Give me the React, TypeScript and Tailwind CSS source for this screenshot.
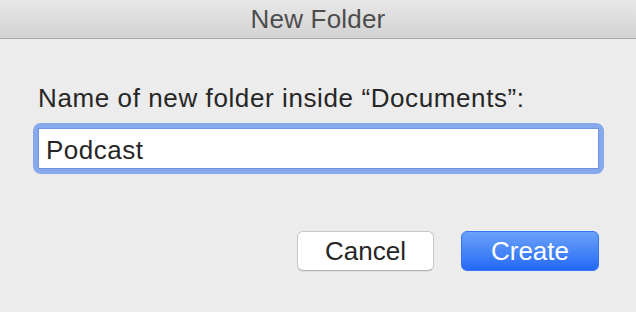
import { useState } from "react"

const font = { fontFamily: '"Liberation Sans", Arial, sans-serif' }

const App = () => {
  const [name, setName] = useState("Podcast")

  return (
    <div
      className="w-[636px] h-[312px] bg-[#ececec] flex flex-col overflow-hidden"
      style={font}>
      <div className="h-[39px] shrink-0 bg-gradient-to-b from-[#e8e8e8] to-[#d2d2d2] border-b border-[#ababab] flex items-center justify-center">
        <span className="text-[26px] leading-[30px] text-[#4d4d4d] tracking-[0.2px]">
          New Folder
        </span>
      </div>
      <div className="flex flex-col pl-[33px] pr-[32px] pt-[44px]">
        <label className="ml-[5px] text-[26px] leading-[30px] text-[#262626] tracking-[0.6px]">
          Name of new folder inside “Documents”:
        </label>
        <div className="mt-[10px] w-[571px] rounded-[8px] bg-[#86a8ec] p-[5px]">
          <input
            className="block h-[41px] w-full bg-white border border-[#6f93dc] pl-[7px] pt-[4px] text-[26px] leading-[30px] text-[#262626] tracking-[0.5px] outline-none"
            style={font}
            value={name}
            onChange={(e) => setName(e.target.value)}
          />
        </div>
        <div className="flex justify-end gap-[27px] mt-[57px] pr-[5px]">
          <button
            className="w-[137px] h-[40px] bg-white rounded-[6px] border border-[#c8c8c8] border-b-[#b3b3b3] text-[26px] leading-[30px] text-[#262626] shadow-[0_1px_0_rgba(0,0,0,0.05)]"
            style={font}>
            Cancel
          </button>
          <button
            className="w-[138px] h-[40px] rounded-[6px] bg-gradient-to-b from-[#6aa1f9] to-[#2468f5] border border-[#3573f3] text-[26px] leading-[30px] text-white"
            style={font}>
            Create
          </button>
        </div>
      </div>
    </div>
  )
}

export default App
